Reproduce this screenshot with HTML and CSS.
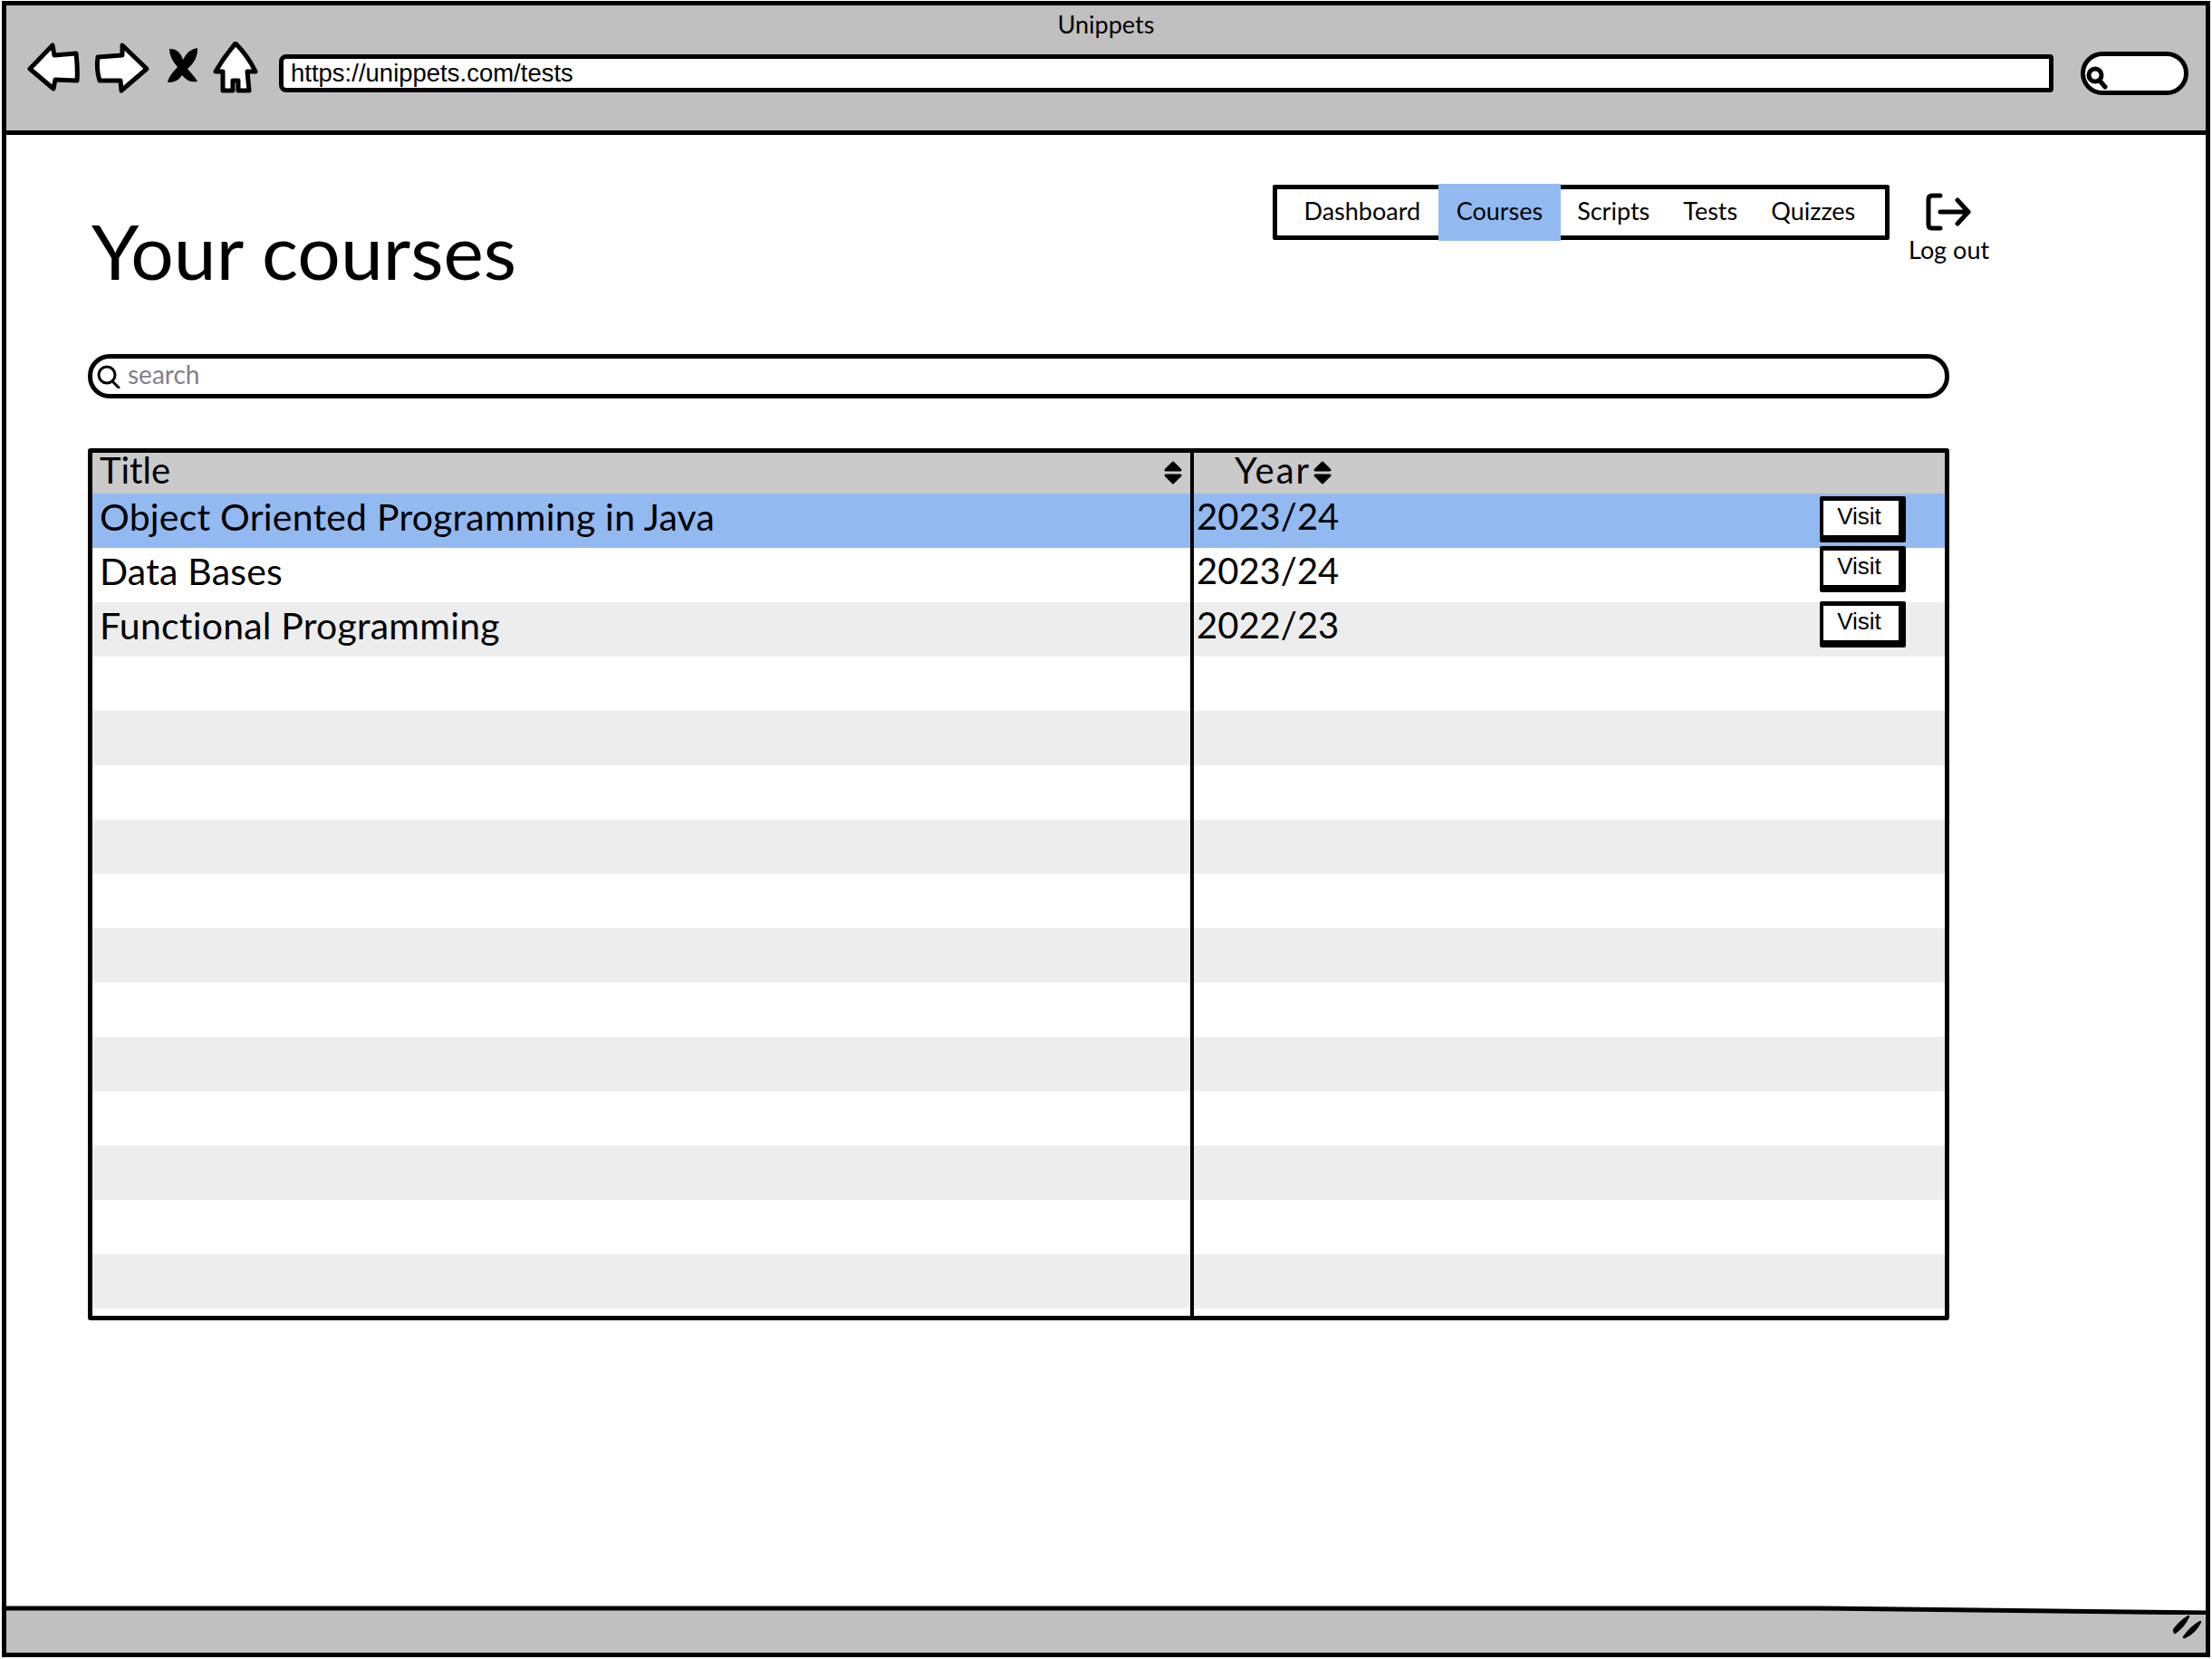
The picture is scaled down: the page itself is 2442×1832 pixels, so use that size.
FILE: index.html
```html
<!DOCTYPE html>
<html lang="en">
<head>
  <meta charset="UTF-8" />
  <title>Unippets</title>
  <link rel="stylesheet" href="styles.css">
</head>
<body>
  <div class="window">
    <header class="toolbar">
      <div class="window-title">Unippets</div>
      <div class="toolbar-row">
        <svg class="browser-icons" width="262" height="60" viewBox="0 0 262 60">
          <path class="icon-line" d="M3 30 L28 4 L30 15 L54 13 Q56 30 55 43 L31 42 L29 52 Z" />
          <path class="icon-line" d="M78 17 L105 15 L105 4 L132 30 L104 54 L103 43 L80 43 Q76 30 78 17 Z" />
          <path class="icon-solid" d="M157 8 Q168 7 172 20 Q178 8 188 7 Q189 20 177 30 Q186 40 188 44 Q178 46 171 37 Q165 46 155 45 Q156 38 166 28 Q157 18 157 8 Z" />
          <path class="icon-line" d="M230 2 Q244 16 252 33 L243 33 L245 54 L233 54 L233 43 L227 43 L227 54 L216 54 L216 33 L208 33 Q218 16 230 2 Z" />
        </svg>
        <div class="url-box">https://unippets.com/tests</div>
        <div class="mini-search">
          <svg width="26" height="26" viewBox="0 0 26 26">
            <circle class="icon-stroke" cx="11" cy="10" r="7" />
            <path class="icon-stroke" d="M16 16 L22 23" />
          </svg>
        </div>
      </div>
    </header>

    <main class="page">
      <div class="page-head">
        <h1 class="page-title">Your courses</h1>
        <nav class="tabs">
          <a class="tab">Dashboard</a>
          <a class="tab tab-active">Courses</a>
          <a class="tab">Scripts</a>
          <a class="tab">Tests</a>
          <a class="tab">Quizzes</a>
        </nav>
        <div class="logout">
          <svg width="50" height="42" viewBox="0 0 50 42">
            <path class="icon-stroke" d="M16 3 H7 Q3 3 3 7 V35 Q3 39 7 39 H16" />
            <path class="icon-stroke" d="M16 21 H47 M35 8 L47 21 L35 34" />
          </svg>
          <span>Log out</span>
        </div>
      </div>

      <div class="search">
        <svg width="26" height="26" viewBox="0 0 26 26">
          <circle class="icon-thin" cx="11" cy="11" r="9" />
          <path class="icon-thin" d="M17 18 L24 25" />
        </svg>
        <span class="search-hint">search</span>
      </div>

      <div class="table-frame">
        <table class="courses">
          <thead>
            <tr>
              <th class="col-title">
                <div class="head-cell head-title">
                  <span>Title</span>
                  <svg class="sort" width="20" height="26" viewBox="0 0 20 26">
                    <path d="M10 2 L18 10 H2 Z M10 24 L18 16 H2 Z" />
                  </svg>
                </div>
              </th>
              <th>
                <div class="head-cell head-year">
                  <span>Year</span>
                  <svg class="sort" width="20" height="26" viewBox="0 0 20 26">
                    <path d="M10 2 L18 10 H2 Z M10 24 L18 16 H2 Z" />
                  </svg>
                </div>
              </th>
            </tr>
          </thead>
          <tbody>
            <tr class="row-selected">
              <td>Object Oriented Programming in Java</td>
              <td><div class="year-cell">2023/24<button class="visit visit-a">Visit</button></div></td>
            </tr>
            <tr>
              <td>Data Bases</td>
              <td><div class="year-cell">2023/24<button class="visit visit-b">Visit</button></div></td>
            </tr>
            <tr>
              <td>Functional Programming</td>
              <td><div class="year-cell">2022/23<button class="visit visit-c">Visit</button></div></td>
            </tr>
            <tr><td></td><td></td></tr>
            <tr><td></td><td></td></tr>
            <tr><td></td><td></td></tr>
            <tr><td></td><td></td></tr>
            <tr><td></td><td></td></tr>
            <tr><td></td><td></td></tr>
            <tr><td></td><td></td></tr>
            <tr><td></td><td></td></tr>
            <tr><td></td><td></td></tr>
            <tr><td></td><td></td></tr>
            <tr><td></td><td></td></tr>
            <tr><td></td><td></td></tr>
            <tr class="row-spacer"><td></td><td></td></tr>
          </tbody>
        </table>
      </div>
    </main>

    <footer class="statusbar">
      <svg class="status-edge" width="2432" height="10" viewBox="0 0 2432 10">
        <path class="status-fill" d="M0 3 L2000 3 L2432 8 V10 H0 Z" />
        <path class="status-line" d="M0 3 L2000 3 L2432 8" />
      </svg>
      <div class="status-body">
        <svg width="34" height="27" viewBox="0 0 34 27">
          <path class="grip" d="M3 17 Q9 8 19 2 Q14 13 4 20 Z" />
          <path class="grip" d="M14 25 Q21 14 32 8 Q27 19 15 25 Z" />
        </svg>
      </div>
    </footer>
  </div>
</body>
</html>
```

FILE: styles.css
```css
html, body {
  margin: 0;
  padding: 0;
  background: #fff;
}
body {
  font-family: "Lato", "Noto Sans", sans-serif;
  color: #000;
}
.window {
  box-sizing: border-box;
  width: 2438px;
  height: 1829px;
  margin: 1px 0 0 2px;
  border: 5px solid #000;
  display: flex;
  flex-direction: column;
}

/* browser chrome */
.toolbar {
  box-sizing: border-box;
  height: 143px;
  background: #c0c0c0;
  border-bottom: 5px solid #000;
  flex-shrink: 0;
}
.window-title {
  text-align: center;
  font-size: 27px;
  line-height: 32px;
  padding-top: 5px;
}
.toolbar-row {
  display: flex;
  align-items: center;
  padding: 13px 0 0 23px;
}
.browser-icons {
  flex-shrink: 0;
  margin-top: -10px;
}
.icon-line {
  fill: #fff;
  stroke: #000;
  stroke-width: 5;
  stroke-linejoin: round;
}
.icon-solid {
  fill: #000;
}
.icon-stroke {
  fill: none;
  stroke: #000;
  stroke-width: 5;
  stroke-linecap: round;
  stroke-linejoin: round;
}
.icon-thin {
  fill: none;
  stroke: #000;
  stroke-width: 3;
  stroke-linecap: round;
}
.url-box {
  box-sizing: border-box;
  width: 1959px;
  height: 42px;
  margin-left: 16px;
  padding-left: 8px;
  background: #fff;
  border: 5px solid #000;
  border-radius: 8px 4px 4px 8px;
  font-family: "Liberation Sans", Arial, sans-serif;
  font-size: 27.5px;
  line-height: 32px;
}
.mini-search {
  box-sizing: border-box;
  width: 119px;
  height: 48px;
  margin-left: 30px;
  padding-top: 11px;
  background: #fff;
  border: 5px solid #000;
  border-radius: 24px;
}
.mini-search svg {
  display: block;
}

/* page */
.page {
  flex: 1;
  padding-left: 90px;
}
.page-head {
  display: flex;
  align-items: flex-start;
  width: 2098px;
  height: 242px;
}
.page-title {
  margin: 78px 0 0 4px;
  font-size: 84px;
  line-height: 100px;
  font-weight: 400;
}
.tabs {
  box-sizing: border-box;
  display: flex;
  height: 61px;
  width: 681px;
  margin: 55px 0 0 auto;
  padding: 0 10px 0 11px;
  border: 5px solid #000;
  border-radius: 2px;
}
.tab {
  margin: -6px 0;
  padding: 0 18.5px;
  font-size: 27px;
  line-height: 60px;
}
.tab:first-child {
  padding-right: 20px;
}
.tab-active {
  background: #93b9f1;
  padding: 0 19.5px;
}
.logout {
  width: 88px;
  margin: 64px 0 0 21px;
  text-align: center;
  font-size: 27px;
  line-height: 37px;
  white-space: nowrap;
}
.logout svg {
  display: block;
  margin: 0 auto 2px;
}
.search {
  box-sizing: border-box;
  display: flex;
  align-items: center;
  gap: 8px;
  width: 2055px;
  height: 49px;
  padding-left: 5px;
  background: #fff;
  border: 5px solid #000;
  border-radius: 24px;
}
.search-hint {
  margin-bottom: 6px;
  color: #80808f;
  font-size: 28px;
}

/* course table */
.table-frame {
  box-sizing: border-box;
  width: 2055px;
  margin-top: 55px;
  border: 5px solid #000;
  border-radius: 3px;
}
.courses {
  width: 100%;
  border-collapse: collapse;
  table-layout: fixed;
}
.col-title {
  width: 1214px;
}
.courses th {
  box-sizing: border-box;
  height: 45px;
  padding: 0;
  background: #cacaca;
  font-size: 40px;
  font-weight: 400;
  text-align: left;
}
.courses td {
  box-sizing: border-box;
  height: 60px;
  padding: 0 0 9px 8px;
  font-size: 41px;
  letter-spacing: 0.2px;
  white-space: nowrap;
}
.courses th:first-child, .courses td:first-child {
  border-right: 4px solid #000;
}
.courses td:last-child {
  padding: 0 0 0 3px;
  font-size: 40px;
  letter-spacing: 0;
}
.courses tbody tr:nth-child(odd) {
  background: #ededed;
}
.courses tbody tr.row-selected {
  background: #93b9f1;
}
.courses tr.row-spacer td {
  height: 8px;
  padding: 0;
  font-size: 0;
}
.head-cell {
  box-sizing: border-box;
  display: flex;
  align-items: center;
  height: 45px;
  padding-bottom: 8px;
}
.head-title {
  justify-content: space-between;
  padding-left: 8px;
  padding-right: 9px;
}
.head-year {
  gap: 3px;
  padding-left: 45px;
  letter-spacing: 2px;
}
.sort {
  margin-bottom: -6px;
  fill: #000;
  stroke: #000;
  stroke-width: 3;
  stroke-linejoin: round;
}
.year-cell {
  display: flex;
  justify-content: space-between;
  align-items: flex-start;
  height: 60px;
  line-height: 51px;
  padding-right: 43px;
}
.visit {
  box-sizing: border-box;
  width: 95px;
  height: 51px;
  padding: 0 4px 4px 0;
  background: #fff;
  color: #000;
  border: solid #000;
  border-width: 5px 8px 8px 4px;
  border-radius: 2px;
  font-family: "Liberation Sans", Arial, sans-serif;
  font-size: 26px;
  line-height: 30px;
}
.visit-a { margin-top: 3px; }
.visit-b { margin-top: -2px; }
.visit-c { margin-top: -1px; }

/* status bar */
.statusbar {
  flex-shrink: 0;
  height: 52px;
}
.status-edge {
  display: block;
}
.status-fill {
  fill: #c0c0c0;
}
.status-line {
  fill: none;
  stroke: #000;
  stroke-width: 5;
}
.status-body {
  display: flex;
  justify-content: flex-end;
  height: 42px;
  padding-right: 4px;
  background: #c0c0c0;
}
.grip {
  fill: #000;
  stroke: #000;
  stroke-width: 2.5;
  stroke-linejoin: round;
}
```
